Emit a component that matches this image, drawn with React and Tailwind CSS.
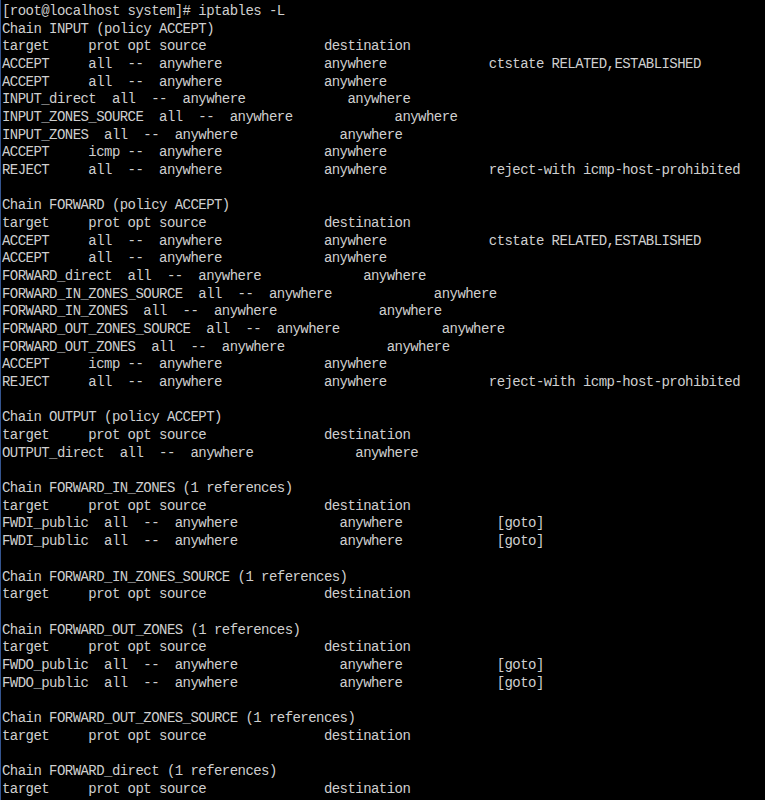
const lines = [
  "[root@localhost system]# iptables -L",
  "Chain INPUT (policy ACCEPT)",
  "target     prot opt source               destination",
  "ACCEPT     all  --  anywhere             anywhere             ctstate RELATED,ESTABLISHED",
  "ACCEPT     all  --  anywhere             anywhere",
  "INPUT_direct  all  --  anywhere             anywhere",
  "INPUT_ZONES_SOURCE  all  --  anywhere             anywhere",
  "INPUT_ZONES  all  --  anywhere             anywhere",
  "ACCEPT     icmp --  anywhere             anywhere",
  "REJECT     all  --  anywhere             anywhere             reject-with icmp-host-prohibited",
  "",
  "Chain FORWARD (policy ACCEPT)",
  "target     prot opt source               destination",
  "ACCEPT     all  --  anywhere             anywhere             ctstate RELATED,ESTABLISHED",
  "ACCEPT     all  --  anywhere             anywhere",
  "FORWARD_direct  all  --  anywhere             anywhere",
  "FORWARD_IN_ZONES_SOURCE  all  --  anywhere             anywhere",
  "FORWARD_IN_ZONES  all  --  anywhere             anywhere",
  "FORWARD_OUT_ZONES_SOURCE  all  --  anywhere             anywhere",
  "FORWARD_OUT_ZONES  all  --  anywhere             anywhere",
  "ACCEPT     icmp --  anywhere             anywhere",
  "REJECT     all  --  anywhere             anywhere             reject-with icmp-host-prohibited",
  "",
  "Chain OUTPUT (policy ACCEPT)",
  "target     prot opt source               destination",
  "OUTPUT_direct  all  --  anywhere             anywhere",
  "",
  "Chain FORWARD_IN_ZONES (1 references)",
  "target     prot opt source               destination",
  "FWDI_public  all  --  anywhere             anywhere            [goto]",
  "FWDI_public  all  --  anywhere             anywhere            [goto]",
  "",
  "Chain FORWARD_IN_ZONES_SOURCE (1 references)",
  "target     prot opt source               destination",
  "",
  "Chain FORWARD_OUT_ZONES (1 references)",
  "target     prot opt source               destination",
  "FWDO_public  all  --  anywhere             anywhere            [goto]",
  "FWDO_public  all  --  anywhere             anywhere            [goto]",
  "",
  "Chain FORWARD_OUT_ZONES_SOURCE (1 references)",
  "target     prot opt source               destination",
  "",
  "Chain FORWARD_direct (1 references)",
  "target     prot opt source               destination",
];

export default function App() {
  return (
    <div className="w-[765px] h-[800px] overflow-hidden bg-black border-l border-[#34548f]">
      {/* terminal output */}
      <div className="pt-[3px] pl-px font-['Liberation_Mono',monospace] text-[14px] tracking-[-0.55px] text-[#cfcfcf]">
        {lines.map((line, i) => (
          <div key={i} className="h-[17.68px] leading-[17.68px] whitespace-pre">
            {line}
          </div>
        ))}
      </div>
    </div>
  );
}
